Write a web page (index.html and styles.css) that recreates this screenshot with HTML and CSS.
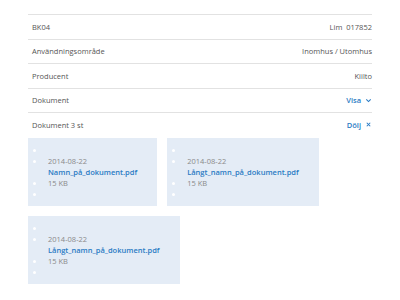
FILE: index.html
```html
<!DOCTYPE html>
<html lang="sv">
<head>
    <meta charset="UTF-8">
    <meta name="viewport" content="width=device-width, initial-scale=1.0">
    <title>Produktinformation</title>
    <link rel="stylesheet" href="styles.css">
</head>
<body>
    <div class="product">
        <div class="info-row">
            <span>BK04</span>
            <span>Lim&nbsp; 017852</span>
        </div>
        <div class="info-row">
            <span>Användningsområde</span>
            <span>Inomhus / Utomhus</span>
        </div>
        <div class="info-row">
            <span>Producent</span>
            <span>Kiilto</span>
        </div>
        <div class="info-row">
            <span>Dokument</span>
            <a class="toggle" href="#">Visa
                <svg class="toggle-icon" viewBox="0 0 8 8"><path d="M1.5 2.8 L4 5.2 L6.5 2.8" fill="none" stroke="currentColor" stroke-width="1.3"/></svg>
            </a>
        </div>
        <div class="info-row">
            <span>Dokument 3 st</span>
            <a class="toggle" href="#">Dölj
                <svg class="toggle-icon" viewBox="0 0 8 8"><path d="M2 2 L6 6 M6 2 L2 6" fill="none" stroke="currentColor" stroke-width="1.2"/></svg>
            </a>
        </div>

        <div class="documents">
            <div class="doc-card">
                <ul class="doc-list">
                    <li></li>
                    <li class="doc-date">2014-08-22</li>
                    <li class="doc-name nobullet"><a href="#">Namn_på_dokument.pdf</a></li>
                    <li class="doc-size">15 KB</li>
                    <li></li>
                </ul>
            </div>
            <div class="doc-card">
                <ul class="doc-list">
                    <li></li>
                    <li class="doc-date">2014-08-22</li>
                    <li class="doc-name nobullet"><a href="#">Långt_namn_på_dokument.pdf</a></li>
                    <li class="doc-size">15 KB</li>
                    <li></li>
                </ul>
            </div>
            <div class="doc-card">
                <ul class="doc-list">
                    <li></li>
                    <li class="doc-date">2014-08-22</li>
                    <li class="doc-name nobullet"><a href="#">Långt_namn_på_dokument.pdf</a></li>
                    <li class="doc-size">15 KB</li>
                    <li></li>
                </ul>
            </div>
        </div>
    </div>
</body>
</html>
```

FILE: styles.css
```css
body {
    margin: 0;
    background: #fff;
    font-family: "Open Sans", Arial, sans-serif;
    font-size: 7.5px;
    color: #555;
}

.product {
    width: 344px;
    margin: 14px 0 0 28px;
}

.info-row {
    display: flex;
    justify-content: space-between;
    align-items: center;
    height: 23.5px;
    padding-left: 4px;
    border-top: 1px solid #e2e2e2;
}

.toggle {
    display: flex;
    align-items: center;
    gap: 4px;
    color: #2a7bc4;
    font-weight: 600;
    text-decoration: none;
}

.toggle-icon {
    width: 7px;
    height: 7px;
}

.documents {
    display: flex;
    flex-wrap: wrap;
    gap: 10px;
    margin-top: 1.5px;
}

.doc-card {
    background: #e4ecf6;
    padding: 7px 20px 6px 0;
}

.doc-list {
    list-style: none;
    margin: 0;
    padding: 0;
}

.doc-list li {
    position: relative;
    height: 11px;
    line-height: 11px;
    padding-left: 20px;
    white-space: nowrap;
}

.doc-list li::before {
    content: "";
    position: absolute;
    left: 5px;
    top: 4px;
    width: 3px;
    height: 3px;
    border-radius: 50%;
    background: #fff;
}

.doc-list li.nobullet::before {
    display: none;
}

.doc-date,
.doc-size {
    color: #8a8a8a;
}

.doc-name a {
    color: #2a7bc4;
    font-weight: 600;
    text-decoration: none;
}
```
